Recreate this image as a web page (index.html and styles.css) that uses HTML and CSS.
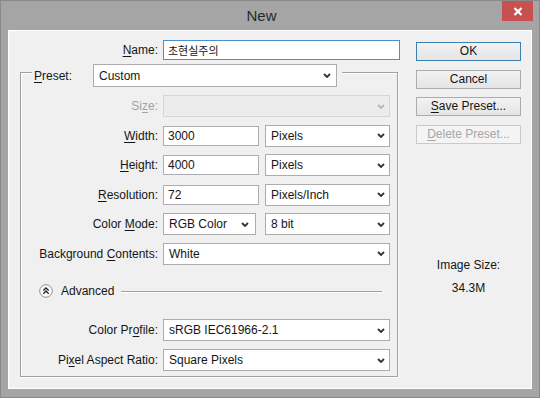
FILE: index.html
```html
<!DOCTYPE html>
<html lang="en">
<head>
    <meta charset="UTF-8">
    <title>New</title>
    <link rel="stylesheet" href="styles.css">
</head>
<body>
    <div class="window">
        <div class="titlebar">
            <span class="title">New</span>
            <button class="close" aria-label="Close">
                <svg width="10" height="9" viewBox="0 0 10 9"><path d="M1.5 1 L8.5 8 M8.5 1 L1.5 8" stroke="#fff" stroke-width="2.2" fill="none"/></svg>
            </button>
        </div>

        <div class="client">
            <div class="form">
                <div class="name-row">
                    <span class="lbl"><u>N</u>ame:</span>
                    <div class="input focus"><span class="ko">초현실주의</span></div>
                </div>

                <div class="group">
                    <div class="group-head">
                        <span class="lbl"><u>P</u>reset:</span>
                        <div class="select preset">Custom
                            <svg class="chev" width="8" height="5" viewBox="0 0 8 5"><path d="M1 1 L4 4 L7 1" /></svg>
                        </div>
                    </div>

                    <div class="rows">
                        <div class="row">
                            <span class="lbl off">Si<u>z</u>e:</span>
                            <div class="ctrls">
                                <div class="select wide off">
                                    <svg class="chev" width="8" height="5" viewBox="0 0 8 5"><path d="M1 1 L4 4 L7 1" /></svg>
                                </div>
                            </div>
                        </div>
                        <div class="row">
                            <span class="lbl"><u>W</u>idth:</span>
                            <div class="ctrls">
                                <div class="input num">3000</div>
                                <div class="select unit">Pixels
                                    <svg class="chev" width="8" height="5" viewBox="0 0 8 5"><path d="M1 1 L4 4 L7 1" /></svg>
                                </div>
                            </div>
                        </div>
                        <div class="row">
                            <span class="lbl"><u>H</u>eight:</span>
                            <div class="ctrls">
                                <div class="input num">4000</div>
                                <div class="select unit">Pixels
                                    <svg class="chev" width="8" height="5" viewBox="0 0 8 5"><path d="M1 1 L4 4 L7 1" /></svg>
                                </div>
                            </div>
                        </div>
                        <div class="row">
                            <span class="lbl"><u>R</u>esolution:</span>
                            <div class="ctrls">
                                <div class="input num">72</div>
                                <div class="select unit">Pixels/Inch
                                    <svg class="chev" width="8" height="5" viewBox="0 0 8 5"><path d="M1 1 L4 4 L7 1" /></svg>
                                </div>
                            </div>
                        </div>
                        <div class="row">
                            <span class="lbl">Color <u>M</u>ode:</span>
                            <div class="ctrls">
                                <div class="select mode">RGB Color
                                    <svg class="chev" width="8" height="5" viewBox="0 0 8 5"><path d="M1 1 L4 4 L7 1" /></svg>
                                </div>
                                <div class="select unit">8 bit
                                    <svg class="chev" width="8" height="5" viewBox="0 0 8 5"><path d="M1 1 L4 4 L7 1" /></svg>
                                </div>
                            </div>
                        </div>
                        <div class="row">
                            <span class="lbl">Background <u>C</u>ontents:</span>
                            <div class="ctrls">
                                <div class="select wide">White
                                    <svg class="chev" width="8" height="5" viewBox="0 0 8 5"><path d="M1 1 L4 4 L7 1" /></svg>
                                </div>
                            </div>
                        </div>
                    </div>

                    <div class="advanced">
                        <svg width="14" height="14" viewBox="0 0 14 14">
                            <circle cx="7" cy="7" r="6.3" fill="#fbfbfb" stroke="#8e8e8e"/>
                            <path d="M4.3 6.6 L7 3.9 L9.7 6.6 M4.3 9.7 L7 7 L9.7 9.7" stroke="#2a2a2a" stroke-width="1.4" fill="none"/>
                        </svg>
                        <span class="adv-text">Advanced</span>
                        <span class="adv-line"></span>
                    </div>

                    <div class="rows second">
                        <div class="row">
                            <span class="lbl">Color Pr<u>o</u>file:</span>
                            <div class="ctrls">
                                <div class="select wide">sRGB IEC61966-2.1
                                    <svg class="chev" width="8" height="5" viewBox="0 0 8 5"><path d="M1 1 L4 4 L7 1" /></svg>
                                </div>
                            </div>
                        </div>
                        <div class="row">
                            <span class="lbl">Pi<u>x</u>el Aspect Ratio:</span>
                            <div class="ctrls">
                                <div class="select wide">Square Pixels
                                    <svg class="chev" width="8" height="5" viewBox="0 0 8 5"><path d="M1 1 L4 4 L7 1" /></svg>
                                </div>
                            </div>
                        </div>
                    </div>
                </div>
            </div>

            <div class="side">
                <button class="btn default">OK</button>
                <button class="btn">Cancel</button>
                <button class="btn"><u>S</u>ave Preset...</button>
                <button class="btn disabled"><u>D</u>elete Preset...</button>

                <div class="image-size">
                    <div>Image Size:</div>
                    <div class="size-value">34.3M</div>
                </div>
            </div>
        </div>
    </div>
</body>
</html>
```

FILE: styles.css
```css
* {
    box-sizing: border-box;
}

body {
    margin: 0;
    font-family: "Liberation Sans", Arial, sans-serif;
    font-size: 12px;
    color: #151515;
}

u {
    text-decoration-thickness: 1px;
    text-underline-offset: 2px;
}

.window {
    width: 540px;
    height: 398px;
    background-color: #a5a5a5;
    border: 1px solid #8a8a8a;
    display: flex;
    flex-direction: column;
}

.titlebar {
    height: 29px;
    display: flex;
    flex-shrink: 0;
}

.title {
    flex: 1;
    text-align: center;
    padding-left: 20px;
    font-size: 15px;
    line-height: 29px;
    color: #2a2a2a;
}

.close {
    width: 31px;
    height: 20px;
    margin-right: 6px;
    padding: 0;
    border: none;
    background-color: #c75050;
    display: flex;
    align-items: center;
    justify-content: center;
}

.client {
    margin: 0 7px;
    height: 359px;
    background-color: #f0f0f0;
    border: 1px solid #fff;
    display: flex;
    padding-top: 9px;
}

.form {
    width: 389px;
    flex-shrink: 0;
}

.lbl {
    flex-shrink: 0;
    white-space: nowrap;
}

.lbl.off {
    color: #a2a2a2;
}

.name-row {
    display: flex;
    align-items: center;
    height: 20px;
}

.name-row .lbl {
    width: 149px;
    margin-right: 5px;
    text-align: right;
}

.input {
    height: 20px;
    width: 237px;
    flex-shrink: 0;
    border: 1px solid #abadb3;
    background-color: #fff;
    padding-left: 4px;
    line-height: 18px;
    white-space: nowrap;
}

.input.focus {
    border-color: #4a8fd0;
}

.input.num {
    width: 96px;
}

.ko {
    font-family: "Noto Sans CJK KR", sans-serif;
    font-size: 11px;
}

.select {
    height: 22px;
    border: 1px solid #acacac;
    background-color: #fff;
    display: flex;
    align-items: center;
    justify-content: space-between;
    padding: 0 4px 0 5px;
    white-space: nowrap;
}

.select.off {
    background-color: #ececec;
    border-color: #d6d6d6;
    justify-content: flex-end;
}

.chev path {
    fill: none;
    stroke: #333;
    stroke-width: 1.8;
}

.select.off .chev path {
    stroke: #b8b8b8;
}

.select.preset {
    width: 244px;
    height: 23px;
    padding-right: 5px;
}

.select.wide {
    width: 227px;
}

.select.unit {
    width: 125px;
}

.select.mode {
    width: 93px;
    padding-right: 6px;
}

.group {
    margin: 12px 0 0 11px;
    width: 378px;
    height: 305px;
    border: 1px solid #a0a0a0;
    box-shadow: inset 1px 1px 0 #fff, 1px 1px 0 #fff;
}

.group-head {
    display: flex;
    align-items: center;
    width: fit-content;
    height: 23px;
    margin: -9px 0 0 11px;
    padding: 0 5px 0 2px;
    background-color: #f0f0f0;
}

.group-head .lbl {
    width: 59px;
}

.rows {
    display: flex;
    flex-direction: column;
    gap: 7.5px;
    margin-top: 8px;
}

.rows.second {
    margin-top: 20px;
    gap: 8px;
}

.row {
    display: flex;
    align-items: center;
    height: 22px;
}

.row .lbl {
    width: 137px;
    margin-right: 5px;
    text-align: right;
}

.ctrls {
    width: 227px;
    display: flex;
    align-items: center;
    justify-content: space-between;
}

.advanced {
    display: flex;
    align-items: center;
    height: 16px;
    margin-top: 18.5px;
    padding-left: 18px;
}

.adv-text {
    margin-left: 8px;
}

.adv-line {
    flex: 1;
    height: 2px;
    margin: 1px 15px 0 7px;
    border-top: 1px solid #a0a0a0;
    border-bottom: 1px solid #fff;
}

.side {
    width: 105px;
    margin-left: 18px;
    padding-top: 2px;
    display: flex;
    flex-direction: column;
    gap: 8.5px;
}

.btn {
    height: 19px;
    width: 105px;
    padding: 0;
    border: 1px solid #acacac;
    background: linear-gradient(#f2f2f2, #e5e5e5);
    font-family: inherit;
    font-size: 12px;
    color: #151515;
    line-height: 17px;
    text-align: center;
}

.btn.default {
    border-color: #3c7fb1;
}

.btn.disabled {
    color: #a6a6a6;
    border-color: #cacaca;
    background: #f4f4f4;
}

.image-size {
    margin-top: 105.5px;
    text-align: center;
    line-height: 15px;
}

.size-value {
    margin-top: 8px;
}
```
